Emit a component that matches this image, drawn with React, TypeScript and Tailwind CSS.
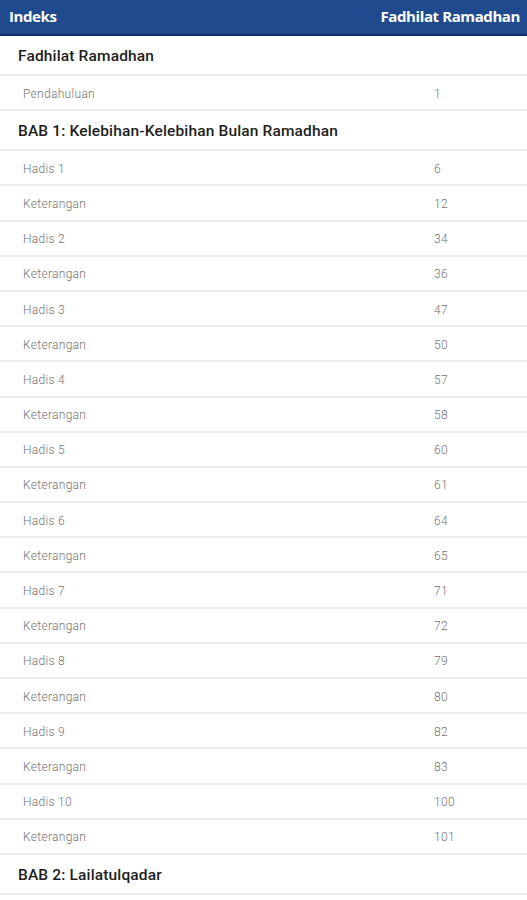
import React from 'react';

type Row = { kind: 'section'; title: string } | { kind: 'item'; title: string; page: number };

const ROWS: Row[] = [
  { kind: 'section', title: 'Fadhilat Ramadhan' },
  { kind: 'item', title: 'Pendahuluan', page: 1 },
  { kind: 'section', title: 'BAB 1: Kelebihan-Kelebihan Bulan Ramadhan' },
  { kind: 'item', title: 'Hadis 1', page: 6 },
  { kind: 'item', title: 'Keterangan', page: 12 },
  { kind: 'item', title: 'Hadis 2', page: 34 },
  { kind: 'item', title: 'Keterangan', page: 36 },
  { kind: 'item', title: 'Hadis 3', page: 47 },
  { kind: 'item', title: 'Keterangan', page: 50 },
  { kind: 'item', title: 'Hadis 4', page: 57 },
  { kind: 'item', title: 'Keterangan', page: 58 },
  { kind: 'item', title: 'Hadis 5', page: 60 },
  { kind: 'item', title: 'Keterangan', page: 61 },
  { kind: 'item', title: 'Hadis 6', page: 64 },
  { kind: 'item', title: 'Keterangan', page: 65 },
  { kind: 'item', title: 'Hadis 7', page: 71 },
  { kind: 'item', title: 'Keterangan', page: 72 },
  { kind: 'item', title: 'Hadis 8', page: 79 },
  { kind: 'item', title: 'Keterangan', page: 80 },
  { kind: 'item', title: 'Hadis 9', page: 82 },
  { kind: 'item', title: 'Keterangan', page: 83 },
  { kind: 'item', title: 'Hadis 10', page: 100 },
  { kind: 'item', title: 'Keterangan', page: 101 },
  { kind: 'section', title: 'BAB 2: Lailatulqadar' },
];

export default function App() {
  return (
    <div className="w-[527px] h-[900px] overflow-hidden bg-white font-['Roboto',sans-serif]">
      {/* Top bar */}
      <div className="h-[36px] box-border bg-[#1f4b8e] border-b-2 border-[#0e2c72] flex items-center justify-between pl-[9px] pr-[7px] pb-[1px]">
        <span className="text-white font-bold text-[15px] tracking-[-0.4px] font-['Open_Sans',sans-serif]">Indeks</span>
        <span className="text-white font-bold text-[15px] tracking-[-0.4px] font-['Open_Sans',sans-serif]">Fadhilat Ramadhan</span>
      </div>

      {/* Index list */}
      <div className="flex flex-col">
        {ROWS.map((row, i) =>
          row.kind === 'section' ? (
            <div
              key={i}
              className="h-[40px] box-border border-b-2 border-[#ededed] flex items-center pl-[18px] pt-[3px]"
            >
              <span className="text-[15.5px] font-medium text-[#1e1e1e] tracking-[0.15px]">{row.title}</span>
            </div>
          ) : (
            <div
              key={i}
              className="h-[35.2px] box-border border-b-2 border-[#ededed] flex items-center pt-[2px]"
            >
              <span className="pl-[23px] w-[434px] text-[12px] font-light text-[#747474] tracking-[0.3px]">{row.title}</span>
              <span className="text-[12px] font-light text-[#747474] tracking-[0.3px]">{row.page}</span>
            </div>
          )
        )}
      </div>
    </div>
  );
}
